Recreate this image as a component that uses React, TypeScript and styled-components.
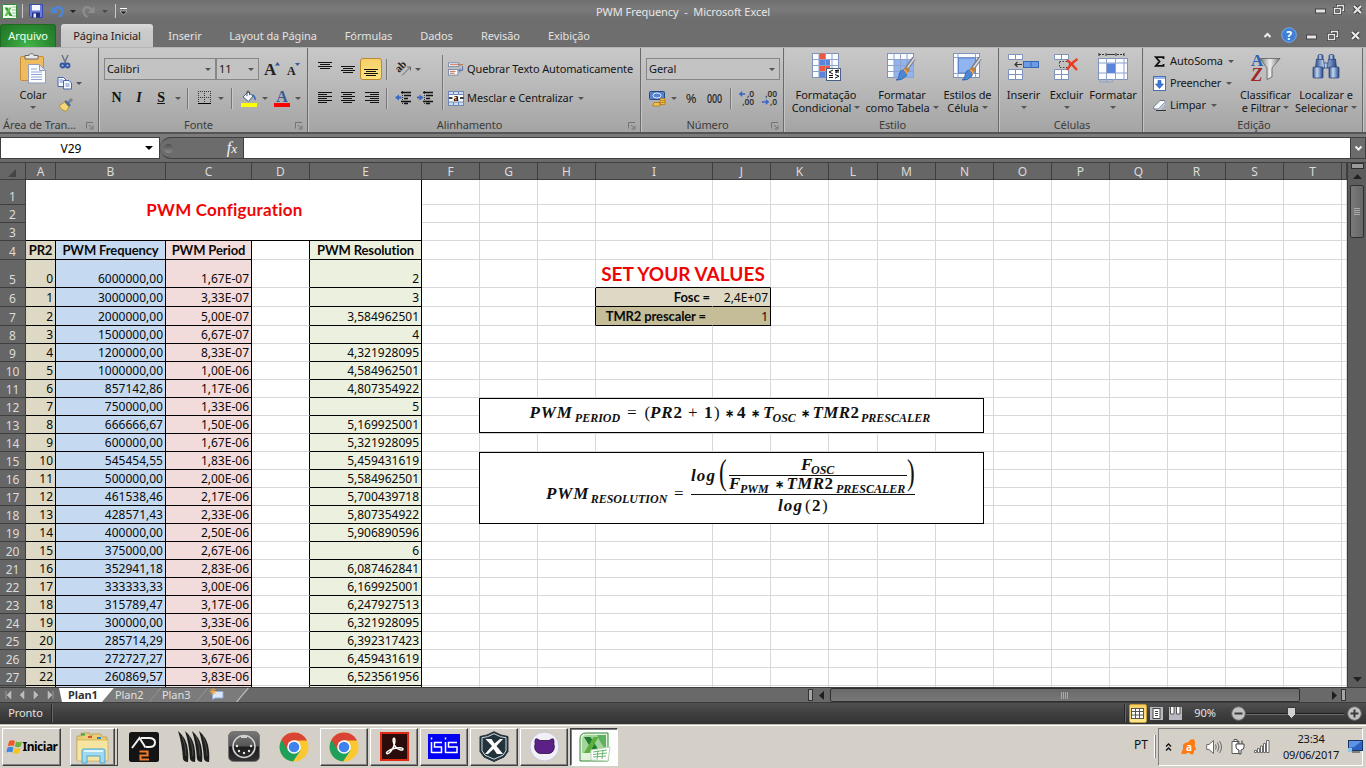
import React from 'react';
import styled, { createGlobalStyle, css } from 'styled-components';

const Global = createGlobalStyle`
  * { box-sizing: border-box; }
  body { margin: 0; background: #6d6d6d; overflow: hidden; }
`;

const ui = '"Noto Sans", "Open Sans", sans-serif';
const calibri = 'Lato, "Noto Sans", sans-serif';
const cambria = '"Liberation Serif", serif';

const Window = styled.div`
  width: 1366px;
  height: 768px;
  display: flex;
  flex-direction: column;
  font: 11px/14px ${ui};
  letter-spacing: -0.08px;
  color: #161616;
  white-space: nowrap;
  overflow: hidden;
  svg { display: block; flex: none; overflow: visible; }
`;

const Slot = styled.div<{ $w: number }>`
  width: ${p => p.$w}px;
  flex: none;
  display: flex;
  align-items: center;
  justify-content: center;
`;
const Spacer = styled.div`flex: 1;`;

/* ---------- title bar and tabs ---------- */

const TitleBar = styled.header`
  height: 24px;
  display: flex;
  align-items: center;
  background: linear-gradient(#6f6f6f, #7a7a7a 40%, #6e6e6e 75%);
`;
const WindowTitle = styled.div`
  width: 1170px;
  padding: 0 0 1px 458px;
  color: #e6e6e6;
  white-space: pre;
  letter-spacing: -0.06px;
`;
const QuickBar = styled.div`
  width: 138px;
  height: 24px;
  display: flex;
  align-items: center;
  padding-bottom: 2px;
`;
const ButtonStrip = styled.div`
  display: flex;
  align-items: center;
  height: 18px;
  margin-bottom: 6px;
`;
const TabBar = styled.nav`
  height: 23px;
  display: flex;
  background: #6e6e6e;
`;
const Tab = styled.div<{ $w: number; $kind?: 'file' | 'active' }>`
  width: ${p => p.$w}px;
  height: 24px;
  line-height: 24px;
  text-align: center;
  color: #e2e2e2;
  ${p => p.$kind === 'file' && css`
    height: 23px;
    margin-right: 5px;
    color: #f2fff0;
    border: 1px solid #1f6a22;
    border-bottom: 0;
    border-radius: 3px 3px 0 0;
    line-height: 22px;
    background: radial-gradient(ellipse at 50% 100%, #43b649, #2a8a30 60%, #217326);
  `}
  ${p => p.$kind === 'active' && css`
    color: #1b1b1b;
    border-radius: 3px 3px 0 0;
    background: linear-gradient(#dadada, #cbcbcb 30%, #c6c6c6);
  `}
`;
const TabTools = styled.div`
  display: flex;
  align-items: center;
  margin-left: auto;
  padding-bottom: 1px;
`;

/* ---------- ribbon ---------- */

const Ribbon = styled.section`
  height: 87px;
  display: flex;
  border-top: 1px solid #b4b4b4;
  border-bottom: 2px solid #555;
  background: linear-gradient(#c8c8c8, #bdbdbd 35%, #a4a4a4);
`;
const Group = styled.div<{ $w: number }>`
  width: ${p => p.$w}px;
  height: 84px;
  flex: none;
  display: flex;
  flex-direction: column;
  border-right: 1px solid #6a6a6a;
  box-shadow: 1px 0 0 #c4c4c4;
`;
const GroupBody = styled.div<{ $left: number }>`
  height: 68px;
  flex: none;
  padding-left: ${p => p.$left}px;
  display: flex;
`;
const GroupLabel = styled.div`
  height: 16px;
  flex: none;
  display: flex;
  align-items: center;
  justify-content: center;
  padding: 2px 0 0 3px;
  color: #3c3c3c;
  svg { margin: 1px 4px 0 auto; }
  span { flex: 1; text-align: center; }
`;
const Rows = styled.div<{ $w?: number }>`
  display: flex;
  flex-direction: column;
  width: ${p => (p.$w ? p.$w + 'px' : 'auto')};
`;
const ToolRow = styled.div<{ $top?: number; $h?: number }>`
  display: flex;
  align-items: center;
  height: ${p => p.$h ?? 22}px;
  margin-top: ${p => p.$top ?? 0}px;
`;
const Combo = styled.div<{ $w: number }>`
  width: ${p => p.$w}px;
  height: 22px;
  display: flex;
  align-items: center;
  justify-content: space-between;
  padding: 0 4px 0 2px;
  border: 1px solid #868686;
  background: #c3c3c3;
`;
const BigButton = styled.div<{ $w: number }>`
  width: ${p => p.$w}px;
  display: flex;
  flex-direction: column;
  align-items: center;
  line-height: 13px;
  padding-top: 5px;
  flex: none;
`;
const BigIcon = styled.div`
  height: 35px;
  display: flex;
  align-items: flex-start;
`;
const Line = styled.div`
  display: flex;
  align-items: center;
  gap: 3px;
  height: 13px;
`;
const Highlight = styled.div`
  width: 22px;
  height: 22px;
  display: flex;
  align-items: center;
  justify-content: center;
  border: 1px solid #b98a2e;
  border-radius: 3px;
  background: linear-gradient(#f6cf6a, #ffe47c);
`;
const Sep = styled.div<{ $h?: number }>`
  width: 2px;
  height: ${p => p.$h ?? 21}px;
  border-left: 1px solid #777;
  border-right: 1px solid #c8c8c8;
`;
const Glyph = styled.span<{ $size?: number; $bold?: boolean; $italic?: boolean; $line?: boolean; $color?: string }>`
  font: ${p => (p.$italic ? 'italic' : 'normal')} ${p => (p.$bold ? 700 : 400)} ${p => p.$size ?? 14}px/16px ${cambria};
  color: ${p => p.$color ?? '#111'};
  text-decoration: ${p => (p.$line ? 'underline' : 'none')};
`;
const Label = styled.span<{ $ls?: number }>`
  letter-spacing: ${p => p.$ls ?? -0.08}px;
  margin-left: 2px;
  margin-right: 5px;
`;

/* ---------- formula bar ---------- */

const FormulaBar = styled.section`
  height: 29px;
  display: flex;
  padding-top: 3px;
  background: linear-gradient(#7c7c7c, #6a6a6a);
  border-bottom: 1px solid #3f3f3f;
`;
const NameBox = styled.div`
  width: 160px;
  height: 22px;
  display: flex;
  align-items: center;
  border: 1px solid #3f3f3f;
  background: #fff;
  font-size: 12px;
  color: #000;
  letter-spacing: 0;
  span { width: 138px; text-align: center; padding: 1px 0 0 2px; }
`;
const FxBar = styled.div`
  width: 84px;
  height: 22px;
  display: flex;
  align-items: center;
  justify-content: space-between;
  padding: 0 7px 0 4px;
  border: solid #3f3f3f;
  border-width: 1px 0;
  border-radius: 11px 0 0 11px;
  background: #6c6c6c;
`;
const Knob = styled.i`
  width: 9px;
  height: 9px;
  border-radius: 50%;
  background: linear-gradient(#4f4f4f, #8b8b8b);
`;
const FormulaInput = styled.div`
  flex: 1;
  height: 22px;
  border: 1px solid #3f3f3f;
  margin-left: -1px;
  background: #fff;
`;
const ExpandButton = styled.div`
  width: 15px;
  height: 22px;
  display: flex;
  align-items: center;
  justify-content: center;
  border: 1px solid #3f3f3f;
  border-left: 0;
  background: #6c6c6c;
`;

/* ---------- sheet ---------- */

const COLS = [30, 110, 86, 58, 112, 58, 58, 58, 117, 58, 58, 49, 58, 58, 58, 58, 58, 58, 58, 58, 5];
const ROWS = [25, 18, 18, 19, 28, 19, 19, ...Array(21).fill(18)];

const SheetArea = styled.main`
  height: 524px;
  display: flex;
`;
const Sheet = styled.div`
  width: 1347px;
  height: 524px;
  overflow: hidden;
  position: relative;
  display: grid;
  grid-template-columns: 26px ${COLS.map(c => c + 'px').join(' ')};
  grid-template-rows: 17px ${ROWS.map(r => r + 'px').join(' ')};
  background: #fff;
`;
const Head = styled.div`
  display: flex;
  align-items: flex-end;
  justify-content: center;
  overflow: hidden;
  font: 12px/14px ${ui};
  letter-spacing: 0;
  color: #dcdcdc;
  background: #666;
  border-right: 1px solid #3e3e3e;
  border-bottom: 1px solid #3e3e3e;
`;
const tones = { none: 'transparent', tan: '#ddd9c4', blue: '#c5d9f1', pink: '#f2dcdb', green: '#ebf1de', khaki: '#c4bd97' };
type Tone = keyof typeof tones;
const Cell = styled.div<{ $tone?: Tone; $right?: string; $bottom?: string; $bold?: boolean; $center?: boolean; $pad?: number }>`
  display: flex;
  align-items: flex-end;
  justify-content: ${p => (p.$center ? 'center' : 'flex-end')};
  overflow: hidden;
  padding: 0 ${p => p.$pad ?? (p.$center ? 0 : 2)}px ${p => (p.$bold ? 1 : 0)}px 0;
  font: ${p => (p.$bold ? `700 13px/16px ${calibri}` : `12px/16px ${ui}`)};
  letter-spacing: ${p => (p.$bold ? -0.12 : 0)}px;
  color: #0a0a0a;
  background: ${p => tones[p.$tone ?? 'none']};
  border-right: 1px solid ${p => p.$right ?? '#d6d8d9'};
  border-bottom: 1px solid ${p => p.$bottom ?? '#d6d8d9'};
`;
const MergedTitle = styled.div`
  grid-column: span 5;
  grid-row: span 3;
  display: flex;
  align-items: center;
  justify-content: center;
  padding-left: 2px;
  font: 700 17px/20px ${calibri};
  letter-spacing: 0.22px;
  color: #ee0606;
  border-right: 1px solid #000;
  border-bottom: 1px solid #000;
`;
const SetValues = styled.div`
  grid-column: span 2;
  display: flex;
  align-items: flex-end;
  justify-content: center;
  padding-bottom: 1px;
  font: 700 19px/25px ${calibri};
  letter-spacing: 0.02px;
  color: #ee0606;
  border-right: 1px solid #d6d8d9;
  border-bottom: 1px solid #000;
`;

const FormulaBox = styled.div<{ $top: number; $h: number }>`
  position: absolute;
  left: 479px;
  top: ${p => p.$top}px;
  width: 505px;
  height: ${p => p.$h}px;
  border: 1px solid #000;
  background: #fff;
  display: flex;
  align-items: flex-start;
  font: italic 700 17px/16px ${cambria};
  letter-spacing: 0;
  color: #111;
`;
const Expr = styled.div<{ $left?: number; $top?: number }>`
  margin: ${p => p.$top ?? 0}px 0 0 ${p => p.$left ?? 0}px;
  height: 18px;
  flex: none;
`;
const Term = styled.span<{ $w: number; $ls?: number }>`
  display: inline-block;
  width: ${p => p.$w}px;
  letter-spacing: ${p => p.$ls ?? 0}px;
`;
const Sub = styled(Term)`
  font-size: 12px;
  line-height: 8px;
  vertical-align: -4px;
`;
const Op = styled(Term)`
  font-style: normal;
  font-weight: 400;
`;
const Star = styled(Op)`
  font-size: 11px;
  line-height: 8px;
  font-weight: 700;
  vertical-align: 1px;
`;
const Num = styled(Term)`font-style: normal;`;
const Upright = styled.span`font-style: normal;`;
const Fraction = styled.div`
  display: flex;
  flex-direction: column;
  width: 224px;
  margin-top: 4px;
`;
const Numerator = styled.div`
  height: 38px;
  display: flex;
  border-bottom: 1px solid #111;
`;
const InnerFraction = styled.div`
  width: 178px;
  height: 37px;
`;
const InnerTop = styled.div`
  height: 19px;
  padding-left: 72px;
  border-bottom: 1px solid #111;
`;
const Tall = styled.span<{ $w: number }>`
  width: ${p => p.$w}px;
  font: normal 400 35px/32px ${cambria};
  transform: scaleX(0.66);
  transform-origin: left top;
`;

const VScroll = styled.div`
  flex: 1;
  display: flex;
  flex-direction: column;
  align-items: center;
  background: #5c5c5c;
  border-left: 1px solid #3b3b3b;
`;
const SplitBox = styled.i`
  width: 13px;
  height: 6px;
  border: 1px solid #2e2e2e;
  background: #9a9a9a;
`;
const VThumb = styled.div`
  width: 14px;
  height: 53px;
  margin-top: 5px;
  display: flex;
  align-items: center;
  justify-content: center;
  border: 1px solid #2f2f2f;
  border-radius: 2px;
  background: linear-gradient(90deg, #7b7b7b, #666);
`;

/* ---------- sheet tabs, status bar ---------- */

const SheetTabs = styled.div`
  height: 16px;
  display: flex;
  align-items: center;
  background: #696969;
  border-top: 1px solid #3c3c3c;
  border-bottom: 1px solid #3c3c3c;
`;
const SheetTab = styled.div<{ $w: number; $active?: boolean }>`
  width: ${p => p.$w}px;
  height: 14px;
  line-height: 14px;
  margin-right: -6px;
  padding-left: ${p => (p.$active ? 9 : 13)}px;
  font-weight: ${p => (p.$active ? 700 : 400)};
  color: ${p => (p.$active ? '#333' : '#e0e0e0')};
  background: ${p => (p.$active ? '#fff' : '#7b7b7b')};
  clip-path: ${p => (p.$active ? 'polygon(0 0,100% 0,calc(100% - 12px) 100%,3px 100%)' : 'polygon(12px 0,100% 0,calc(100% - 12px) 100%,0 100%)')};
`;
const Edge = styled.i`
  width: 1px;
  height: 18px;
  margin: 0 -7px 0 -1px;
  background: #c4c4c4;
  transform: rotate(40deg);
`;
const HThumb = styled.div`
  width: 470px;
  height: 14px;
  display: flex;
  align-items: center;
  justify-content: center;
  border: 1px solid #2f2f2f;
  border-radius: 2px;
  background: linear-gradient(#6a6a6a, #777);
`;
const HSplit = styled.i`
  width: 5px;
  height: 12px;
  border: 1px solid #333;
  background: #a5a5a5;
`;
const StatusBar = styled.footer`
  height: 21px;
  display: flex;
  align-items: center;
  padding: 0 2px 1px 0;
  color: #e4e4e4;
  background: linear-gradient(#505050, #404040 45%, #333);
`;
const StatusDivider = styled.i`
  width: 2px;
  height: 18px;
  background: #262626;
  border-right: 1px solid #666;
`;
const ViewButton = styled.div<{ $on?: boolean }>`
  width: 18px;
  height: 19px;
  display: flex;
  align-items: center;
  justify-content: center;
  ${p => p.$on && css`
    border: 1px solid #c29a3b;
    border-radius: 2px;
    background: linear-gradient(#f8cf60, #ffe98c);
  `}
`;
const Track = styled.div`
  width: 98px;
  height: 12px;
  display: flex;
  justify-content: center;
  padding-right: 7px;
  background: linear-gradient(#1c1c1c, #1c1c1c) 0 6px / 100% 1px no-repeat, linear-gradient(#707070, #707070) 0 7px / 100% 1px no-repeat;
`;

/* ---------- taskbar ---------- */

const Taskbar = styled.footer`
  height: 44px;
  display: flex;
  align-items: center;
  padding: 1px 3px 0 2px;
  background: #d4d0c8;
  box-shadow: inset 0 1px #c0bdb6, inset 0 2px #fff;
`;
const TaskButton = styled.div<{ $w: number; $state?: 'raised' | 'pressed' }>`
  width: ${p => p.$w}px;
  height: 38px;
  margin-right: 2px;
  flex: none;
  display: flex;
  align-items: center;
  justify-content: center;
  border: 1px solid transparent;
  ${p => p.$state === 'raised' && css`
    border-color: #fff #404040 #404040 #fff;
    box-shadow: inset -1px -1px #808080;
  `}
  ${p => p.$state === 'pressed' && css`
    border-color: #404040 #fff #fff #404040;
    box-shadow: inset 1px 1px #808080;
    background: #fdfdfd;
  `}
`;
const Start = styled(TaskButton)`
  font: 700 12px/16px ${ui};
  letter-spacing: -0.5px;
  color: #000;
  margin-right: 9px;
`;
const StackEdge = styled.i`
  width: 3px;
  height: 38px;
  margin: 0 7px 0 -2px;
  border: solid;
  border-width: 1px 1px 1px 0;
  border-color: #fff #404040 #404040;
  background: #d4d0c8;
`;
const Language = styled.div`
  width: 26px;
  padding: 0 0 4px 6px;
  font-size: 12px;
  color: #111;
`;
const Tray = styled.div`
  width: 205px;
  height: 38px;
  display: flex;
  align-items: center;
  border: 1px solid;
  border-color: #808080 #fff #fff #808080;
`;
const Clock = styled.div`
  width: 74px;
  text-align: center;
  font-size: 11px;
  line-height: 16px;
  letter-spacing: -0.25px;
  color: #111;
  padding-right: 2px;
`;
const TraySep = styled.i`
  width: 2px;
  height: 23px;
  margin-right: 2px;
  border-left: 1px solid #fff;
  border-right: 1px solid #808080;
`;

/* ---------- icons ---------- */

const Arrow = ({ c = '#555', s = 6 }: { c?: string; s?: number }) => (
  <svg width={s} height={Math.ceil(s / 2)} viewBox="0 0 6 3"><path d="M0 0h6L3 3z" fill={c} /></svg>
);
const Launcher = () => (
  <svg width="8" height="8" viewBox="0 0 8 8" fill="none" stroke="#737373"><path d="M.5 6.500V.5H7M3 3l3 3M7 3.500V7H3.500" /></svg>
);
const ExcelSmall = () => (
  <svg width="15" height="15" viewBox="0 0 15 15">
    <rect x=".5" y=".5" width="14" height="14" rx="1" fill="#f2f9ef" stroke="#2f8a3a" />
    <path d="M10 3h4M10 6h4M10 9h4M10 12h4" stroke="#8cc695" />
    <path d="M2.500 3.500h3l5 8.500H7.500z" fill="#2d9a3a" /><path d="M9.500 3.500H7L2.500 12H5z" fill="#6bbf45" />
  </svg>
);
const Save = () => (
  <svg width="14" height="14" viewBox="0 0 14 14">
    <path d="M.5.5h13v13H2L.5 12z" fill="#6a7ce0" stroke="#3a48a8" /><rect x="3" y="1" width="8" height="5.500" fill="#f4f6ff" />
    <rect x="3" y="8.500" width="8" height="5" fill="#23307e" /><rect x="4.500" y="9.500" width="2.500" height="4" fill="#e8ecff" />
  </svg>
);
const Undo = ({ c, flip }: { c: string; flip?: boolean }) => (
  <svg width="13" height="13" viewBox="0 0 13 13"><g transform={flip ? 'translate(13 0) scale(-1 1)' : undefined}>
    <path d="M3 5Q6 1.500 9.500 2.500 13 5 10.500 9.500 9.500 11 7.500 12" fill="none" stroke={c} strokeWidth="2.400" /><path d="M.5 1v7h7z" fill={c} />
  </g></svg>
);
const Min = () => <svg width="11" height="10" viewBox="0 0 11 10"><rect x=".5" y="5" width="10" height="4" fill="#e4e4e4" stroke="#444" /></svg>;
const Restore = () => (
  <svg width="12" height="11" viewBox="0 0 12 11"><g fill="none" stroke="#3f3f3f" strokeWidth="3"><path d="M4.500 3V1.500h6v5H9" /><rect x="1.500" y="4.500" width="6" height="5" /></g>
    <g fill="none" stroke="#e4e4e4" strokeWidth="1.400"><path d="M4.500 3V1.500h6v5H9" /><rect x="1.500" y="4.500" width="6" height="5" /></g></svg>
);
const Close = () => (
  <svg width="11" height="11" viewBox="0 0 11 11"><path d="M2 2l7 7M9 2L2 9" stroke="#3f3f3f" strokeWidth="4" /><path d="M2 2l7 7M9 2L2 9" stroke="#e6e6e6" strokeWidth="2.200" /></svg>
);
const Chevron = ({ down }: { down?: boolean }) => (
  <svg width="9" height="7" viewBox="0 0 9 7"><path d={down ? 'M1.500 1.500l3 3 3-3' : 'M1.500 5l3-3 3 3'} fill="none" stroke="#efefef" strokeWidth="2" /></svg>
);
const Help = () => (
  <svg width="16" height="16" viewBox="0 0 16 16"><circle cx="8" cy="8" r="7.300" fill="#3e7fd8" stroke="#7fa9e4" /><text x="8" y="12.500" textAnchor="middle" fontSize="12" fontWeight="700" fontFamily="Noto Sans" fill="#fff">?</text></svg>
);
const Paste = () => (
  <svg width="28" height="31" viewBox="0 0 28 31">
    <rect x="1.500" y="3.500" width="23" height="24" rx="1.500" fill="#efbb5f" stroke="#c68d35" />
    <path d="M6 2.500h4C10 0 15 0 15 2.500h4V6H6z" fill="#e9e9e9" stroke="#666" />
    <path d="M9.500 11.500h11l6 6V30h-17z" fill="#fdfdff" stroke="#8e9cc0" /><path d="M20.500 11.500v6h6z" fill="#dfe6f5" stroke="#8e9cc0" />
    <path d="M12 16h6M12 19h11M12 21.500h11M12 24h11M12 26.500h11" stroke="#90a5d6" />
  </svg>
);
const Scissors = () => (
  <svg width="12" height="15" viewBox="0 0 12 15"><path d="M3 1l4 9M9 1L5 10" stroke="#6b7688" strokeWidth="1.500" /><circle cx="3.500" cy="11.500" r="2" fill="none" stroke="#2e55a8" strokeWidth="1.800" /><circle cx="8.500" cy="11.500" r="2" fill="none" stroke="#2e55a8" strokeWidth="1.800" /></svg>
);
const Copy = () => (
  <svg width="16" height="14" viewBox="0 0 16 14"><g fill="#f6f9ff" stroke="#4568ae"><path d="M1 1.500h5.500L9 4v6.500H1z" /><path d="M6.500 4.500H12l2.500 2.500v6H6.500z" /></g><path d="M2.500 4H6M2.500 6H6M8.500 8h4M8.500 10h4" stroke="#6a8dd0" /></svg>
);
const Brush = () => (
  <svg width="16" height="14" viewBox="0 0 16 14"><path d="M10 5l4-4" stroke="#7d838f" strokeWidth="3" /><path d="M7 3l5 5" stroke="#4867a5" strokeWidth="2.500" /><path d="M6.500 4l4.500 5-3 4.500Q3 12 1 8z" fill="#f3d77b" stroke="#b38f37" /></svg>
);
const Borders = () => (
  <svg width="14" height="14" viewBox="0 0 14 14"><path d="M0 .5h13M0 6.500h13M.5 0v12M6.500 0v12M12.500 0v12" stroke="#333" strokeDasharray="1 1" fill="none" /><path d="M0 12.500h13" stroke="#000" /></svg>
);
const Bucket = () => (
  <svg width="16" height="17" viewBox="0 0 16 17"><path d="M2 7l5-5 5 4-4.500 5.500z" fill="#f3f7ff" stroke="#49607f" /><path d="M6 6V1.500Q7.500 0 8.500 2v3" fill="none" stroke="#555" /><path d="M11 4q4 1 4 6-2 1-2.500-3z" fill="#3d6fc0" /><rect y="13" width="16" height="4" fill="#ff0" /></svg>
);
const FontColor = () => (
  <svg width="16" height="17" viewBox="0 0 16 17"><text x="8" y="11.500" textAnchor="middle" fontFamily="Liberation Serif" fontWeight="700" fontSize="16" fill="#3b5a95">A</text><rect y="13" width="16" height="4" fill="#f00" /></svg>
);
const GrowA = ({ down }: { down?: boolean }) => (
  <svg width="16" height="18" viewBox="0 0 16 18"><text x="0" y="15" fontFamily="Liberation Serif" fontWeight="700" fontSize={down ? 12 : 17} fill="#222">A</text><path d={down ? 'M8 3h5l-2.500 3z' : 'M11 5.500h5L13.500 2z'} fill="#33589c" /></svg>
);
const lineSets: Record<string, number[][]> = {
  left: [[0, 14], [0, 9], [0, 14], [0, 9], [0, 14], [0, 9]],
  center: [[0, 14], [2, 9], [0, 14], [2, 9], [0, 14], [2, 9]],
  right: [[0, 14], [5, 9], [0, 14], [5, 9], [0, 14], [5, 9]],
};
const AlignIcon = ({ k }: { k: string }) => (
  <svg width="13" height="12" viewBox="0 0 13 12">{lineSets[k].map((l, i) => <rect key={i} x={l[0]} y={i * 2} width={l[1]} height="1" fill="#111" />)}</svg>
);
const VAlign = ({ y }: { y: number }) => (
  <svg width="14" height="16" viewBox="0 0 14 16">{[0, 1, 2, 3].map(i => <rect key={i} x={i % 2 ? 2 : 0} y={y + i * 2} width={i % 2 ? 10 : 14} height="1" fill="#111" />)}</svg>
);
const Orient = () => (
  <svg width="17" height="16" viewBox="0 0 17 16"><text x="0" y="0" transform="translate(4 12) rotate(-45)" fontFamily="Liberation Serif" fontWeight="700" fontSize="11" fill="#222">ab</text><path d="M7 14.500l8-8M12 6h3.500v3.500" fill="none" stroke="#666" /></svg>
);
const Indent = ({ out }: { out?: boolean }) => (
  <svg width="16" height="14" viewBox="0 0 16 14"><path d="M7.500 0v14" stroke="#333" strokeDasharray="1 1" /><path d="M6 1.500h10M9 4.500h7M9 7.500h4M6 10.500h10M9 12.500h4" stroke="#111" strokeWidth="1.300" /><path d={out ? 'M0 6.500l4-3v2h2.500v2H4v2z' : 'M6.500 6.500l-4-3v2H0v2h2.500v2z'} fill="#3867c4" /></svg>
);
const Wrap = () => (
  <svg width="16" height="16" viewBox="0 0 17 16"><g fill="#fff" stroke="#7788a8"><rect x=".5" y="1.500" width="11" height="4" /><rect x=".5" y="8.500" width="10" height="6" /></g><path d="M2 3.500h14M2 10.500h6M2 12.500h5" stroke="#b5623c" /><path d="M15.500 5v4.500M15.500 9.500H12M13.500 7.500l-2 2 2 2" fill="none" stroke="#4e6a9e" /></svg>
);
const Merge = () => (
  <svg width="16" height="15" viewBox="0 0 16 15"><rect x=".5" y=".5" width="15" height="14" fill="#cfdcf2" stroke="#6f87b5" /><path d="M5.500 0v4M10.500 0v4M5.500 11v4M10.500 11v4" stroke="#6f87b5" /><rect x=".5" y="3.500" width="15" height="7.500" fill="#fff" stroke="#6f87b5" /><text x="8" y="10" textAnchor="middle" fontFamily="Liberation Serif" fontWeight="700" fontSize="10">a</text><path d="M1 7h3.500M12 7h3.500" stroke="#000" strokeWidth="1.300" /></svg>
);
const Money = () => (
  <svg width="17" height="17" viewBox="0 0 17 17"><rect x=".5" y="1.500" width="15" height="8" rx="1" fill="#5683cf" stroke="#24487f" /><ellipse cx="8" cy="5.500" rx="4" ry="2.500" fill="none" stroke="#dce8ff" /><path d="M11 8.500h5v6h-5zM5 12.500h6v3.500H3.500z" fill="#f2c14b" stroke="#ad7a1b" strokeWidth=".8" /><path d="M11 10.500h5M11 12.500h5" stroke="#ad7a1b" strokeWidth=".8" /></svg>
);
const Decimal = ({ less }: { less?: boolean }) => (
  <svg width="17" height="16" viewBox="0 0 17 16"><g fontFamily="Noto Sans" fontWeight="600" fontSize="8.500" fill="#333"><text x="16" y="7" textAnchor="end">{less ? ',00' : ',0'}</text><text x="16" y="15" textAnchor="end">{less ? ',0' : ',00'}</text></g>
    <path d={less ? 'M1 11.500h4V9.500l3 2.500-3 2.500v-2H1z' : 'M7 3.500H4v-2L1 4l3 2.500v-2h3z'} fill="#3867c4" stroke="#3867c4" strokeWidth=".5" /></svg>
);
const TableBase = () => <rect x=".5" y=".5" width="26" height="24" fill="#fbfcff" stroke="#7f93ba" />;
const GridLines = () => <path d="M.5 6.500h26M.5 12.500h26M.5 18.500h26M7 0v24M13.500 0v24M20 0v24" stroke="#8fa2c8" fill="none" />;
const CondFmt = () => (
  <svg width="29" height="28" viewBox="0 0 29 28"><TableBase /><path d="M7 .5h6.500v6H7zM7 12.500h11v6H7z" fill="#ef5742" /><path d="M7 6.500h11v6H7zM7 18.500h6.500v6H7z" fill="#5b86dc" /><GridLines />
    <rect x="14.500" y="15.500" width="14" height="12" fill="#fff" stroke="#4a5f85" /><path d="M21 17l-4 2 4 2M17 22.500h4M17 24.500h4M23 19h4M23 17.500h4M26 16.500l-2 3.500M23 21.500l4 1.700-4 2" fill="none" stroke="#111" /></svg>
);
const PaintBrush = () => (
  <g><path d="M27 5l-9 13" stroke="#7c7f88" strokeWidth="4" /><path d="M27.500 5l-8 11" stroke="#d9dbe0" strokeWidth="1.500" /><path d="M18 15l4 3" stroke="#b98343" strokeWidth="4" /><path d="M16 17q5 1 3 6-4 5-10 4 3-1 3-5 1-5 4-5z" fill="#4d86d2" stroke="#2b5ba1" strokeWidth=".7" /><path d="M17 17q3 1 3 4" stroke="#f0a24a" strokeWidth="1.500" fill="none" /></g>
);
const TableFmt = () => (
  <svg width="30" height="29" viewBox="0 0 30 29"><TableBase /><path d="M7 6.500h19.500v18H7z" fill="#8fb4f0" /><GridLines /><PaintBrush /></svg>
);
const CellStyles = () => (
  <svg width="30" height="29" viewBox="0 0 30 29"><TableBase /><path d="M.5 4.500h26M.5 20.500h26M5 0v24M22.500 0v24" stroke="#8fa2c8" /><rect x="5.500" y="5" width="17" height="15" fill="#8fb4f0" stroke="#5e85c9" /><PaintBrush /></svg>
);
const MiniRows = () => (
  <g fill="#fff" stroke="#7f93ba"><path d="M.5 1.500h14v5H.5zM.5 16.500h14v10H.5z" /><path d="M7.500 1.500v5M7.500 16.500v10M.5 21.500h14" /></g>
);
const InsertCells = () => (
  <svg width="31" height="28" viewBox="0 0 31 28"><MiniRows /><rect x="15.500" y="8.500" width="15" height="6" fill="#6d9be6" stroke="#3a66b1" /><path d="M23 8.500v6" stroke="#3a66b1" /><path d="M14 11.500H7M9.500 9L7 11.500 9.500 14" fill="none" stroke="#333" strokeWidth="1.200" /></svg>
);
const DeleteCells = () => (
  <svg width="25" height="28" viewBox="0 0 25 28"><MiniRows /><rect x="5.500" y="8.500" width="10" height="6" fill="none" stroke="#444" strokeDasharray="1.500 1.500" /><path d="M13 7q6 5 10 10M23.500 6Q16 11 13 17" fill="none" stroke="#ea3d22" strokeWidth="2.400" /></svg>
);
const FormatCells = () => (
  <svg width="31" height="30" viewBox="0 0 31 30"><rect x=".5" y="5.500" width="29" height="21" fill="#fbfcff" stroke="#7f93ba" /><path d="M.5 10h29M.5 20h29M8.500 5v24M17.500 5v22M26 5v22M2 26.500v2.500h13V26" stroke="#8fa2c8" fill="none" /><rect x="9" y="10.500" width="8" height="9.500" fill="#5b86dc" /><path d="M1 1.500h6M19 1.500h7" stroke="#333" strokeDasharray="2 1" /><path d="M9 1.500h8" stroke="#333" /><path d="M1 0v3M26 0v3M8 0v3M18 0v3" stroke="#333" /></svg>
);
const Sigma = () => (
  <svg width="11" height="11" viewBox="0 0 11 11"><path d="M9.500 3V1.200H1.800L5.500 5.500 1.800 9.800h7.700V8" fill="none" stroke="#111" strokeWidth="1.800" /></svg>
);
const Fill = () => (
  <svg width="13" height="15" viewBox="0 0 13 15"><rect x=".5" y=".5" width="12" height="14" fill="#fff" stroke="#4b6fb5" /><path d="M1 2h11" stroke="#9db9ea" strokeWidth="2" /><path d="M5 4.500h3V8h2.500l-4 4.500-4-4.500H5z" fill="#3f78d6" stroke="#2552a0" strokeWidth=".6" /></svg>
);
const Eraser = () => (
  <svg width="15" height="12" viewBox="0 0 15 12"><path d="M1.500 8L8 1.500h4.500q1 1 0 2L6.500 10H2z" fill="#fafbff" stroke="#6b7689" /><path d="M6.500 10l6.500-7v3l-4 5H3" fill="#b9c6dd" /><path d="M4 11.500h10" stroke="#333" /></svg>
);
const SortFilter = () => (
  <svg width="30" height="29" viewBox="0 0 30 29"><defs><linearGradient id="fun"><stop offset="0" stopColor="#777" /><stop offset=".5" stopColor="#eee" /><stop offset="1" stopColor="#777" /></linearGradient></defs>
    <path d="M9 5.500h20L21 15v9l-5 2.500V15z" fill="url(#fun)" stroke="#606060" strokeWidth=".8" /><text x="0" y="13" fontFamily="Liberation Serif" fontWeight="700" fontSize="17" fill="#2f62b4">A</text><text x="0" y="28" fontFamily="Liberation Serif" fontWeight="700" fontStyle="italic" fontSize="19" fill="#a02a2a">Z</text></svg>
);
const Binoculars = () => (
  <svg width="28" height="27" viewBox="0 0 28 27"><defs><linearGradient id="bin"><stop offset="0" stopColor="#2f4f8c" /><stop offset=".4" stopColor="#c4d6f3" /><stop offset="1" stopColor="#274684" /></linearGradient></defs>
    <g fill="url(#bin)" stroke="#223f77" strokeWidth=".7"><rect x="9" y="10" width="10" height="5" /><path d="M4.500 6h7l1 9h-9zM16.500 6h7l1 9h-9z" /><rect x="6" y="1.500" width="5" height="5" rx="1.500" /><rect x="17" y="1.500" width="5" height="5" rx="1.500" /><rect x="1" y="14" width="10" height="11" rx="1" /><rect x="17" y="14" width="10" height="11" rx="1" /></g></svg>
);
const NavIcon = ({ d }: { d: string }) => <svg width="7" height="8" viewBox="0 0 7 8"><path d={d} fill="#bdbdbd" stroke="#bdbdbd" strokeWidth=".6" /></svg>;
const NewSheet = () => (
  <svg width="15" height="12" viewBox="0 0 15 12"><path d="M3.500 3.500h10.500v6.500h-8l-2.500 1.500z" fill="#dce7fb" stroke="#93a9d6" /><path d="M4 0v7M.5 3.500h7M1.500 1l5 5M6.500 1l-5 5" stroke="#f2a33a" /></svg>
);
const Grid3 = () => <svg width="13" height="11" viewBox="0 0 13 11"><rect x=".5" y=".5" width="12" height="10" fill="#fff" stroke="#555" /><path d="M.5 3.500h12M.5 7h12M4.500.5v10M8.500.5v10" stroke="#555" /></svg>;
const PageView = () => <svg width="13" height="13" viewBox="0 0 13 13"><rect width="13" height="13" fill="#b9b9c0" /><rect x="3" y="1.500" width="7" height="10" fill="#fff" stroke="#444" /><path d="M5 4.500h3M5 6.500h3M5 8.500h3" stroke="#444" /></svg>;
const BreakView = () => <svg width="13" height="13" viewBox="0 0 13 13"><rect width="13" height="13" fill="#b9b9c0" /><path d="M1.500 0v7H5V0M7.500 0v7H11V0" fill="#fff" stroke="#555" /></svg>;
const ZoomKnob = ({ plus }: { plus?: boolean }) => (
  <svg width="15" height="15" viewBox="0 0 15 15"><circle cx="7.500" cy="7.500" r="6.800" fill="#c2c2c2" stroke="#6a6a6a" /><path d={plus ? 'M3.500 7.500h8M7.500 3.500v8' : 'M3.500 7.500h8'} stroke="#3a3a3a" strokeWidth="2" /></svg>
);
const Slider = () => <svg width="9" height="12" viewBox="0 0 9 12"><path d="M.5.500h8v7L4.500 11.500.5 7.500z" fill="#d0d0d0" stroke="#3a3a3a" /></svg>;

const WinFlag = () => (
  <svg width="17" height="16" viewBox="0 0 17 16"><path d="M3 2.500Q6 .5 9 2L7.800 7Q5 6 1.800 7.500z" fill="#ee5a24" /><path d="M10 2.500q3 1.500 6 0L14.800 7.500q-3 1.500-6 0z" fill="#6cb33e" /><path d="M1.500 8.500q3-1.500 6 0L6.300 13.500q-3-1.500-6 0z" fill="#3f86dd" /><path d="M8.500 9q3 1.500 6 0L13.300 14q-3 1.500-6 0z" fill="#f8c21c" /></svg>
);
const Explorer = () => (
  <svg width="34" height="32" viewBox="0 0 34 32"><path d="M1 5h4V2h9v3h2V3h9l1 3h5v23H1z" fill="#e9ce74" stroke="#b8973f" strokeWidth=".7" /><path d="M5 2.500h4v2H5z" fill="#3ba349" /><path d="M12 5h4v2h-4z" fill="#d9503a" /><path d="M21 6h4v2h-4z" fill="#3b7fc7" /><path d="M1 9h31v21H1z" fill="#f6e5a0" stroke="#c7a94e" strokeWidth=".7" /><path d="M6 32V19.500q0-1.500 1.500-1.500h20q1.500 0 1.500 1.500V32h-5v-7H11v7z" fill="#9fd8ef" stroke="#4fa6cc" /><path d="M8 20h19" stroke="#e4f7ff" strokeWidth="2" /></svg>
);
const Ad2 = () => (
  <svg width="30" height="30" viewBox="0 0 30 30"><rect width="30" height="30" rx="2.500" fill="#141414" /><path d="M3 16L10.500 6 16.500 15.500M12 6h8q6 0 6 4.500t-6 4.500h-3" fill="none" stroke="#f2f2f2" strokeWidth="2" /><path d="M10.500 19.500h8v4h-7v4h8.500" fill="none" stroke="#ee7a2b" strokeWidth="2.200" /></svg>
);
const Claws = () => (
  <svg width="34" height="32" viewBox="0 0 34 32"><g fill="#1d1d1d">{[1, 8, 15, 22].map(x => <path key={x} d={`M${x} 0q7 6 9 14 2 10 1 17-4 0-5-3Q${x + 4} 12 ${x} 0z`} />)}</g><path d="M5 5q4 9 4 20M12 5q4 9 4 20M19 5q4 9 4 20M26 5q4 9 4 20" stroke="#555" fill="none" strokeWidth=".8" /></svg>
);
const Midi = () => (
  <svg width="32" height="31" viewBox="0 0 32 31"><defs><linearGradient id="midi" x2="0" y2="1"><stop offset="0" stopColor="#777" /><stop offset=".48" stopColor="#555" /><stop offset=".52" stopColor="#1b1b1b" /><stop offset="1" stopColor="#333" /></linearGradient></defs><rect x=".5" y=".5" width="31" height="30" rx="5" fill="url(#midi)" stroke="#777" /><circle cx="16" cy="15.500" r="11" fill="none" stroke="#d0d0d0" strokeWidth="1.600" /><path d="M13 4.500h6v2.500h-6z" fill="#d0d0d0" /><g fill="#e6e6e6"><circle cx="9" cy="15" r="1.200" /><circle cx="23" cy="15" r="1.200" /><circle cx="11" cy="20" r="1.200" /><circle cx="21" cy="20" r="1.200" /><circle cx="16" cy="22" r="1.200" /></g></svg>
);
const Chrome = () => (
  <svg width="30" height="30" viewBox="0 0 30 30"><circle cx="15" cy="15" r="14.500" fill="#fbc831" /><path d="M15 15L2.500 7.700A14.500 14.500 0 0 0 14 29.500L21.500 18.500z" fill="#1ea05a" /><path d="M2.500 7.700A14.500 14.500 0 0 1 28 8.500H15L9 18.500z" fill="#d94434" /><circle cx="15" cy="15" r="6.800" fill="#fff" /><circle cx="15" cy="15" r="5.300" fill="#3f82ec" /></svg>
);
const Acrobat = () => (
  <svg width="29" height="29" viewBox="0 0 29 29"><rect width="29" height="29" fill="#e02a14" /><rect x="2" y="2" width="25" height="25" fill="#2a0d0b" /><path d="M7 21.500c-2-1 3-4 7-5s9-1 9 .8-5 .5-7.500-2.500-3-8.500-1.500-8.500 1 5-.5 8.500-4.500 7.700-6.500 6.700z" fill="none" stroke="#fff" strokeWidth="1.500" /></svg>
);
const Isis = () => (
  <svg width="32" height="25" viewBox="0 0 32 25"><rect width="32" height="25" fill="#0000f5" /><path d="M3.500 8v11M3.500 3.500v2M14 8.500H6.500v4.500H13.500v5.500H3.500M17.500 8v11M17.500 3.500v2M29 8.500h-8.500v4.500H29v5.500H17.500" fill="none" stroke="#fff" strokeWidth="1.500" /></svg>
);
const XShield = () => (
  <svg width="30" height="31" viewBox="0 0 30 31"><path d="M15 .7L22 4l7 1.500v15L25 26l-10 4.500L5 26l-4-5.500v-15L8 4z" fill="#22333b" stroke="#22333b" /><path d="M15 2.700l6.500 3 5.500 1v13l-3 4.500-9 4-9-4-3-4.500v-13l5.500-1z" fill="none" stroke="#e8eef0" strokeWidth=".9" /><path d="M6.500 8h6l3 4.500L21 8h3l-6.500 7 6.500 8h-6l-3.500-5L9 23H6l7-8z" fill="#fff" /></svg>
);
const CatCircle = () => (
  <svg width="31" height="31" viewBox="0 0 31 31"><circle cx="15.500" cy="15.500" r="14.500" fill="#f1f0f7" stroke="#c9c6d8" /><path d="M6.500 8q1-1 4.500 1.500h9Q23.500 7 24.500 8q1 3 .3 5 1.200 2 .2 5-1.500 4.500-6 4.500h-7Q7.500 22.500 6 18q-1-3 .2-5-.7-2 .3-5z" fill="#5b2187" stroke="#2a0f45" strokeWidth=".8" /></svg>
);
const ExcelBig = () => (
  <svg width="31" height="30" viewBox="0 0 31 30"><path d="M1 7Q1 1 7 1h22v28H1z" fill="#e3f2dd" stroke="#35853b" /><path d="M3 8q0-5 5-5h19v18H3z" fill="#a3d49c" /><path d="M18 3h9v14q-5-4-9-14z" fill="#5fb060" /><path d="M5 5h6.500l10 16H15z" fill="#1f7b31" /><path d="M19.500 5h-5L5 21h5.500z" fill="#5cae3e" /><path d="M12 18l19-3-2 14-17-1z" fill="#fff" stroke="#b9d6b6" /><path d="M14 20l14-2M14 22.500l14-1.500M14 25l13-1M19 18.500l-1 9M24 18l-1 9" stroke="#5fae62" strokeWidth=".9" /></svg>
);
const Avast = () => (
  <svg width="16" height="16" viewBox="0 0 16 16"><path d="M10 .5q4-1 4 2.500-.5 3 0 5 1.500 1 1 2.500-1 1-2 1 .5 3-1.500 4-1.500.3-4-2-3 2-6 1.500-2-.5-.5-3 1.500-2 1-3.500Q1.500 5.500 3 4.500t4.500-1.500Q8.500 1 10 .5z" fill="#ff7a0f" /><text x="8" y="11.500" textAnchor="middle" fontFamily="Noto Sans" fontWeight="700" fontSize="10" fill="#fff">a</text></svg>
);
const Speaker = () => (
  <svg width="16" height="16" viewBox="0 0 16 16" fill="none" stroke="#6a6a6a"><path d="M.7 5.500H3L7.500 1.500v13L3 10.500H.7z" fill="#fff" /><path d="M9.500 5.500q1.500 2.500 0 5M11.500 3.500q3 4.500 0 9M13.500 2q4 6 0 12" /></svg>
);
const Battery = () => (
  <svg width="15" height="17" viewBox="0 0 15 17"><path d="M2 3.500h7v12H2zM4 1.500h3v2H4z" fill="#fff" stroke="#5a5a5a" /><path d="M6 6h8v3q0 2.500-3 3v4H9v-4q-3-.5-3-3zM8 2.500V6M12 2.500V6" fill="#fff" stroke="#444" /></svg>
);
const Signal = () => (
  <svg width="16" height="13" viewBox="0 0 16 13" fill="#fff" stroke="#6a6a6a"><path d="M.5 10.500h2v2h-2zM3.500 8.500h2v4h-2zM6.500 6h2v6.500h-2zM9.500 3.500h2v9h-2zM12.500.5h2.500v12h-2.500z" /></svg>
);
const Monitor = () => (
  <svg width="15" height="13" viewBox="0 0 15 13"><rect x=".5" y=".5" width="14" height="10" fill="#2b62c4" stroke="#1b3464" /><path d="M1 1h13L6 7 1 8z" fill="#5d94e6" /><path d="M0 8h4v4H0z" fill="#8fc4ea" /><path d="M4 12h8" stroke="#333" /></svg>
);
const UpDouble = () => <svg width="7" height="8" viewBox="0 0 7 8"><path d="M1 3.500L3.500 1 6 3.500M1 7.500L3.500 5 6 7.500" fill="none" stroke="#111" strokeWidth="1.400" /></svg>;
const GripV = () => <svg width="6" height="8" viewBox="0 0 6 8"><path d="M0 .5h6M0 2.500h6M0 4.500h6M0 6.500h6" stroke="#aaa" /></svg>;
const GripH = () => <svg width="8" height="7" viewBox="0 0 8 7"><path d="M.5 0v7M2.500 0v7M4.500 0v7M6.500 0v7" stroke="#aaa" /></svg>;

/* ---------- sheet data ---------- */

const freq = ['6000000,00', '3000000,00', '2000000,00', '1500000,00', '1200000,00', '1000000,00', '857142,86', '750000,00', '666666,67', '600000,00', '545454,55', '500000,00', '461538,46', '428571,43', '400000,00', '375000,00', '352941,18', '333333,33', '315789,47', '300000,00', '285714,29', '272727,27', '260869,57'];
const period = ['1,67E-07', '3,33E-07', '5,00E-07', '6,67E-07', '8,33E-07', '1,00E-06', '1,17E-06', '1,33E-06', '1,50E-06', '1,67E-06', '1,83E-06', '2,00E-06', '2,17E-06', '2,33E-06', '2,50E-06', '2,67E-06', '2,83E-06', '3,00E-06', '3,17E-06', '3,33E-06', '3,50E-06', '3,67E-06', '3,83E-06'];
const resolution = ['2', '3', '3,584962501', '4', '4,321928095', '4,584962501', '4,807354922', '5', '5,169925001', '5,321928095', '5,459431619', '5,584962501', '5,700439718', '5,807354922', '5,906890596', '6', '6,087462841', '6,169925001', '6,247927513', '6,321928095', '6,392317423', '6,459431619', '6,523561956'];
const headers = ['PR2', 'PWM Frequency', 'PWM Period', '', 'PWM Resolution'];
const rowTones: Tone[] = ['tan', 'blue', 'pink', 'none', 'green'];

function cellsForRow(r: number) {
  const out: React.ReactNode[] = [<Head key={`h${r}`}>{r <= 27 ? r : ''}</Head>];
  for (let c = 0; c < COLS.length; c++) {
    const key = `${r}-${c}`;
    if (r <= 3 && c < 5) {
      if (r === 1 && c === 0) out.push(<MergedTitle key={key}>PWM Configuration</MergedTitle>);
      continue;
    }
    if (r >= 4 && c < 5) {
      const i = r - 5;
      const text = r === 4 ? headers[c] : [String(i), freq[i], period[i], '', resolution[i]][c];
      out.push(
        <Cell key={key} $tone={rowTones[c]} $right="#000" $bottom={c === 3 ? undefined : '#000'} $bold={r === 4} $center={r === 4}>
          {r <= 27 ? text : ''}
        </Cell>,
      );
      continue;
    }
    if (r === 5 && c === 8) { out.push(<SetValues key={key}>SET YOUR VALUES</SetValues>); continue; }
    if (r === 5 && c === 9) continue;
    if ((r === 6 || r === 7) && (c === 8 || c === 9)) {
      const tone: Tone = r === 6 ? 'tan' : 'khaki';
      out.push(c === 8
        ? <Cell key={key} $tone={tone} $right={tones[tone]} $bottom="#000" $bold $pad={r === 6 ? 2 : 6}>{r === 6 ? 'Fosc =' : 'TMR2 prescaler ='}</Cell>
        : <Cell key={key} $tone={tone} $right="#000" $bottom="#000">{r === 6 ? '2,4E+07' : '1'}</Cell>);
      continue;
    }
    out.push(<Cell key={key} $right={(r === 6 || r === 7) && c === 7 ? '#000' : undefined} />);
  }
  return out;
}

const Big = ({ w, icon, a, b }: { w: number; icon: React.ReactNode; a: string; b?: string }) => (
  <BigButton $w={w}>
    <BigIcon>{icon}</BigIcon>
    <Line>{a}</Line>
    <Line>{b}<Arrow /></Line>
  </BigButton>
);

export default function App() {
  return (
    <Window>
      <Global />
      <TitleBar>
        <QuickBar>
          <Slot $w={18}><ExcelSmall /></Slot>
          <Slot $w={7}><Sep $h={14} /></Slot>
          <Slot $w={22}><Save /></Slot>
          <Slot $w={21}><Undo c="#4b86d8" /></Slot>
          <Slot $w={9}><Arrow c="#222" /></Slot>
          <Slot $w={22}><Undo c="#8d8d8d" flip /></Slot>
          <Slot $w={11}><Arrow c="#4a4a4a" /></Slot>
          <Slot $w={9}><Sep $h={14} /></Slot>
          <Slot $w={8}><svg width="7" height="7" viewBox="0 0 7 7"><path d="M0 .5h7" stroke="#fff" /><path d="M0 3h7L3.500 7z" fill="#222" stroke="#ddd" strokeWidth=".6" /></svg></Slot>
        </QuickBar>
        <WindowTitle>PWM Frequency  -  Microsoft Excel</WindowTitle>
        <Spacer />
        <ButtonStrip>
          <Slot $w={17}><Min /></Slot><Slot $w={19}><Restore /></Slot><Slot $w={18}><Close /></Slot>
        </ButtonStrip>
      </TitleBar>
      <TabBar>
        <Tab $w={56} $kind="file">Arquivo</Tab>
        <Tab $w={92} $kind="active">Página Inicial</Tab>
        <Tab $w={64}>Inserir</Tab>
        <Tab $w={112}>Layout da Página</Tab>
        <Tab $w={79}>Fórmulas</Tab>
        <Tab $w={57}>Dados</Tab>
        <Tab $w={71}>Revisão</Tab>
        <Tab $w={66}>Exibição</Tab>
        <TabTools>
          <Slot $w={22}><Chevron /></Slot><Slot $w={22}><Help /></Slot><Slot $w={22}><Min /></Slot><Slot $w={22}><Restore /></Slot><Slot $w={22}><Close /></Slot>
        </TabTools>
      </TabBar>

      <Ribbon>
        <Group $w={99}>
          <GroupBody $left={13}>
            <Big w={40} icon={<Paste />} a="Colar" />
            <Rows>
              <ToolRow $top={2}><Slot $w={23}><Scissors /></Slot></ToolRow>
              <ToolRow><Slot $w={23}><Copy /></Slot><Arrow /></ToolRow>
              <ToolRow><Slot $w={25}><Brush /></Slot></ToolRow>
            </Rows>
          </GroupBody>
          <GroupLabel>Área de Tran...<Launcher /></GroupLabel>
        </Group>

        <Group $w={209}>
          <GroupBody $left={5}>
            <Rows>
              <ToolRow $top={10}>
                <Combo $w={112}>Calibri<Arrow /></Combo>
                <Combo $w={43}>11<Arrow /></Combo>
                <Slot $w={25}><GrowA /></Slot>
                <Slot $w={22}><GrowA down /></Slot>
              </ToolRow>
              <ToolRow $top={7}>
                <Slot $w={25}><Glyph $bold>N</Glyph></Slot>
                <Slot $w={20}><Glyph $bold $italic>I</Glyph></Slot>
                <Slot $w={24}><Glyph $bold $line>S</Glyph></Slot>
                <Slot $w={9}><Arrow /></Slot>
                <Slot $w={12}><Sep /></Slot>
                <Slot $w={22}><Borders /></Slot>
                <Slot $w={10}><Arrow /></Slot>
                <Slot $w={12}><Sep /></Slot>
                <Slot $w={22}><Bucket /></Slot>
                <Slot $w={10}><Arrow /></Slot>
                <Slot $w={23}><FontColor /></Slot>
                <Slot $w={9}><Arrow /></Slot>
              </ToolRow>
            </Rows>
          </GroupBody>
          <GroupLabel><span>Fonte</span><Launcher /></GroupLabel>
        </Group>

        <Group $w={333}>
          <GroupBody $left={5}>
            <Rows $w={125}>
              <ToolRow $top={10}>
                <Slot $w={23}><VAlign y={1} /></Slot>
                <Slot $w={23}><VAlign y={5} /></Slot>
                <Slot $w={24}><Highlight><VAlign y={8} /></Highlight></Slot>
                <Slot $w={8}><Sep /></Slot>
                <Slot $w={24}><Orient /></Slot>
                <Slot $w={6}><Arrow /></Slot>
              </ToolRow>
              <ToolRow $top={7}>
                <Slot $w={23}><AlignIcon k="left" /></Slot>
                <Slot $w={23}><AlignIcon k="center" /></Slot>
                <Slot $w={24}><AlignIcon k="right" /></Slot>
                <Slot $w={8}><Sep /></Slot>
                <Slot $w={24}><Indent out /></Slot>
                <Slot $w={20}><Indent /></Slot>
              </ToolRow>
            </Rows>
            <Slot $w={9}><Sep $h={55} /></Slot>
            <Rows>
              <ToolRow $top={10}><Slot $w={18}><Wrap /></Slot><Label $ls={-0.12}>Quebrar Texto Automaticamente</Label></ToolRow>
              <ToolRow $top={7}><Slot $w={18}><Merge /></Slot><Label $ls={-0.1}>Mesclar e Centralizar</Label><Arrow /></ToolRow>
            </Rows>
          </GroupBody>
          <GroupLabel><span>Alinhamento</span><Launcher /></GroupLabel>
        </Group>

        <Group $w={143}>
          <GroupBody $left={5}>
            <Rows>
              <ToolRow $top={10}><Combo $w={134}>Geral<Arrow /></Combo></ToolRow>
              <ToolRow $top={7}>
                <Slot $w={23}><Money /></Slot>
                <Slot $w={9}><Arrow /></Slot>
                <Slot $w={26}><svg width="12" height="12" viewBox="0 0 12 12"><text x="6" y="11" textAnchor="middle" fontFamily="Noto Sans" fontSize="13" fill="#222">%</text></svg></Slot>
                <Slot $w={22}><svg width="16" height="12" viewBox="0 0 16 12"><text x="0" y="11" textLength="15" lengthAdjust="spacingAndGlyphs" fontFamily="Noto Sans" fontWeight="500" fontSize="13" fill="#222">000</text></svg></Slot>
                <Slot $w={9}><Sep /></Slot>
                <Slot $w={23}><Decimal /></Slot>
                <Slot $w={22}><Decimal less /></Slot>
              </ToolRow>
            </Rows>
          </GroupBody>
          <GroupLabel><span>Número</span><Launcher /></GroupLabel>
        </Group>

        <Group $w={215}>
          <GroupBody $left={4}>
            <Big w={76} icon={<CondFmt />} a="Formatação" b="Condicional" />
            <Big w={76} icon={<TableFmt />} a="Formatar" b="como Tabela" />
            <Big w={55} icon={<CellStyles />} a="Estilos de" b="Célula" />
          </GroupBody>
          <GroupLabel><span>Estilo</span></GroupLabel>
        </Group>

        <Group $w={144}>
          <GroupBody $left={3}>
            <Big w={43} icon={<InsertCells />} a="Inserir" />
            <Big w={43} icon={<DeleteCells />} a="Excluir" />
            <Big w={50} icon={<FormatCells />} a="Formatar" />
          </GroupBody>
          <GroupLabel><span>Células</span></GroupLabel>
        </Group>

        <Group $w={220}>
          <GroupBody $left={7}>
            <Rows $w={86}>
              <ToolRow $top={2}><Slot $w={18}><Sigma /></Slot><Label>AutoSoma</Label><Arrow /></ToolRow>
              <ToolRow><Slot $w={18}><Fill /></Slot><Label $ls={-0.2}>Preencher</Label><Arrow /></ToolRow>
              <ToolRow><Slot $w={18}><Eraser /></Slot><Label>Limpar</Label><Arrow /></ToolRow>
            </Rows>
            <Big w={59} icon={<SortFilter />} a="Classificar" b="e Filtrar" />
            <Big w={62} icon={<Binoculars />} a="Localizar e" b="Selecionar" />
          </GroupBody>
          <GroupLabel><span>Edição</span></GroupLabel>
        </Group>
      </Ribbon>

      <FormulaBar>
        <NameBox><span>V29</span><Slot $w={20}><Arrow c="#000" s={8} /></Slot></NameBox>
        <FxBar><Knob /><Glyph $italic $size={16} $color="#f4f4f4">f<small>x</small></Glyph></FxBar>
        <FormulaInput />
        <ExpandButton><Chevron down /></ExpandButton>
      </FormulaBar>

      <SheetArea>
        <Sheet>
          <Head><svg width="10" height="10" viewBox="0 0 10 10"><path d="M8 0v8H0z" fill="#444" /></svg></Head>
          {COLS.map((_, i) => <Head key={i}>{i < 20 ? String.fromCharCode(65 + i) : ''}</Head>)}
          {ROWS.map((_, i) => cellsForRow(i + 1))}
          <FormulaBox $top={235} $h={35}>
            <Expr $left={49.5} $top={6}>
              <Term $w={45.3} $ls={0.9}>PWM</Term><Sub $w={52.2}>PERIOD</Sub><Op $w={17.5}>=</Op><Op $w={5.5}>(</Op>
              <Term $w={38} $ls={0.9}>PR<Upright>2</Upright></Term><Op $w={16}>+</Op><Num $w={10}>1</Num><Op $w={11}>)</Op><Star $w={12}>∗</Star>
              <Num $w={14}>4</Num><Star $w={12}>∗</Star><Term $w={9.5}>T</Term><Sub $w={28.5}>OSC</Sub><Star $w={11.5}>∗</Star>
              <Term $w={48.5} $ls={0.4}>TMR<Upright>2</Upright></Term><Sub $w={70}>PRESCALER</Sub>
            </Expr>
          </FormulaBox>
          <FormulaBox $top={289} $h={72}>
            <Expr $left={66} $top={33}><Term $w={44.7} $ls={0.9}>PWM</Term><Sub $w={83.3}>RESOLUTION</Sub><Op $w={17}>=</Op></Expr>
            <Fraction>
              <Numerator>
                <Expr $top={11}><Term $w={28} $ls={1.1}>log</Term></Expr>
                <Tall $w={10}>(</Tall>
                <InnerFraction>
                  <InnerTop><Term $w={10}>F</Term><Sub $w={26}>OSC</Sub></InnerTop>
                  <Expr><Term $w={11}>F</Term><Sub $w={35.5}>PWM</Sub><Star $w={11}>∗</Star><Term $w={49.5} $ls={0.4}>TMR<Upright>2</Upright></Term><Sub $w={69.5}>PRESCALER</Sub></Expr>
                </InnerFraction>
                <Tall $w={8}>)</Tall>
              </Numerator>
              <Expr $left={87} $top={3}><Term $w={27} $ls={1.1}>log</Term><Op $w={7}>(</Op><Num $w={10}>2</Num><Op $w={6}>)</Op></Expr>
            </Fraction>
          </FormulaBox>
        </Sheet>
        <VScroll>
          <SplitBox />
          <Slot $w={14}><svg width="9" height="11" viewBox="0 0 9 11"><path d="M0 10l4.500-5L9 10z" fill="#222" /></svg></Slot>
          <VThumb><GripV /></VThumb>
          <Spacer />
          <svg width="9" height="12" viewBox="0 0 9 12"><path d="M0 2l4.500 5L9 2z" fill="#222" /></svg>
        </VScroll>
      </SheetArea>

      <SheetTabs>
        <Slot $w={16}><NavIcon d="M1 0v8M6 0v8L2 4z" /></Slot>
        <Slot $w={12}><NavIcon d="M5 0v8L1 4z" /></Slot>
        <Slot $w={14}><NavIcon d="M2 0v8l4-4z" /></Slot>
        <Slot $w={17}><NavIcon d="M1 0v8l4-4zM6 0v8" /></Slot>
        <SheetTab $w={56} $active>Plan1</SheetTab><Edge />
        <SheetTab $w={60}>Plan2</SheetTab><Edge />
        <SheetTab $w={60}>Plan3</SheetTab><Edge />
        <SheetTab $w={53}><NewSheet /></SheetTab><Edge />
        <Spacer />
        <HSplit />
        <Slot $w={17}><svg width="5" height="9" viewBox="0 0 5 9"><path d="M5 0v9L0 4.500z" fill="#1e1e1e" /></svg></Slot>
        <HThumb><GripH /></HThumb>
        <Slot $w={41}><svg width="33" height="9" viewBox="0 0 33 9"><path d="M28 0v9l5-4.500z" fill="#1e1e1e" /></svg></Slot>
        <HSplit />
        <Slot $w={20} />
      </SheetTabs>

      <StatusBar>
        <Slot $w={51}>Pronto</Slot>
        <StatusDivider />
        <Spacer />
        <StatusDivider />
        <Slot $w={23}><ViewButton $on><Grid3 /></ViewButton></Slot>
        <Slot $w={14}><ViewButton><PageView /></ViewButton></Slot>
        <Slot $w={24}><ViewButton><BreakView /></ViewButton></Slot>
        <Slot $w={36}>90%</Slot>
        <Slot $w={7} />
        <Slot $w={16}><ZoomKnob /></Slot>
        <Track><Slider /></Track>
        <Slot $w={20}><ZoomKnob plus /></Slot>
      </StatusBar>

      <Taskbar>
        <Start $w={59} $state="raised"><WinFlag />Iniciar</Start>
        <TaskButton $w={45} $state="raised"><Explorer /></TaskButton>
        <StackEdge />
        <Slot $w={37}><Ad2 /></Slot>
        <Slot $w={14} />
        <Slot $w={36}><Claws /></Slot>
        <Slot $w={14} />
        <Slot $w={36}><Midi /></Slot>
        <Slot $w={14} />
        <Slot $w={36}><Chrome /></Slot>
        <Slot $w={8} />
        <TaskButton $w={48} $state="raised"><Chrome /></TaskButton>
        <TaskButton $w={48} $state="raised"><Acrobat /></TaskButton>
        <TaskButton $w={48} $state="raised"><Isis /></TaskButton>
        <TaskButton $w={48} $state="raised"><XShield /></TaskButton>
        <TaskButton $w={48} $state="raised"><CatCircle /></TaskButton>
        <TaskButton $w={48} $state="pressed"><ExcelBig /></TaskButton>
        <Spacer />
        <Language>PT</Language>
        <TraySep />
        <Tray>
          <Slot $w={18}><UpDouble /></Slot>
          <Slot $w={24}><Avast /></Slot>
          <Slot $w={25}><Speaker /></Slot>
          <Slot $w={22}><Battery /></Slot>
          <Slot $w={27}><Signal /></Slot>
          <Clock>23:34<br />09/06/2017</Clock>
          <Slot $w={12}><Monitor /></Slot>
        </Tray>
      </Taskbar>
    </Window>
  );
}
